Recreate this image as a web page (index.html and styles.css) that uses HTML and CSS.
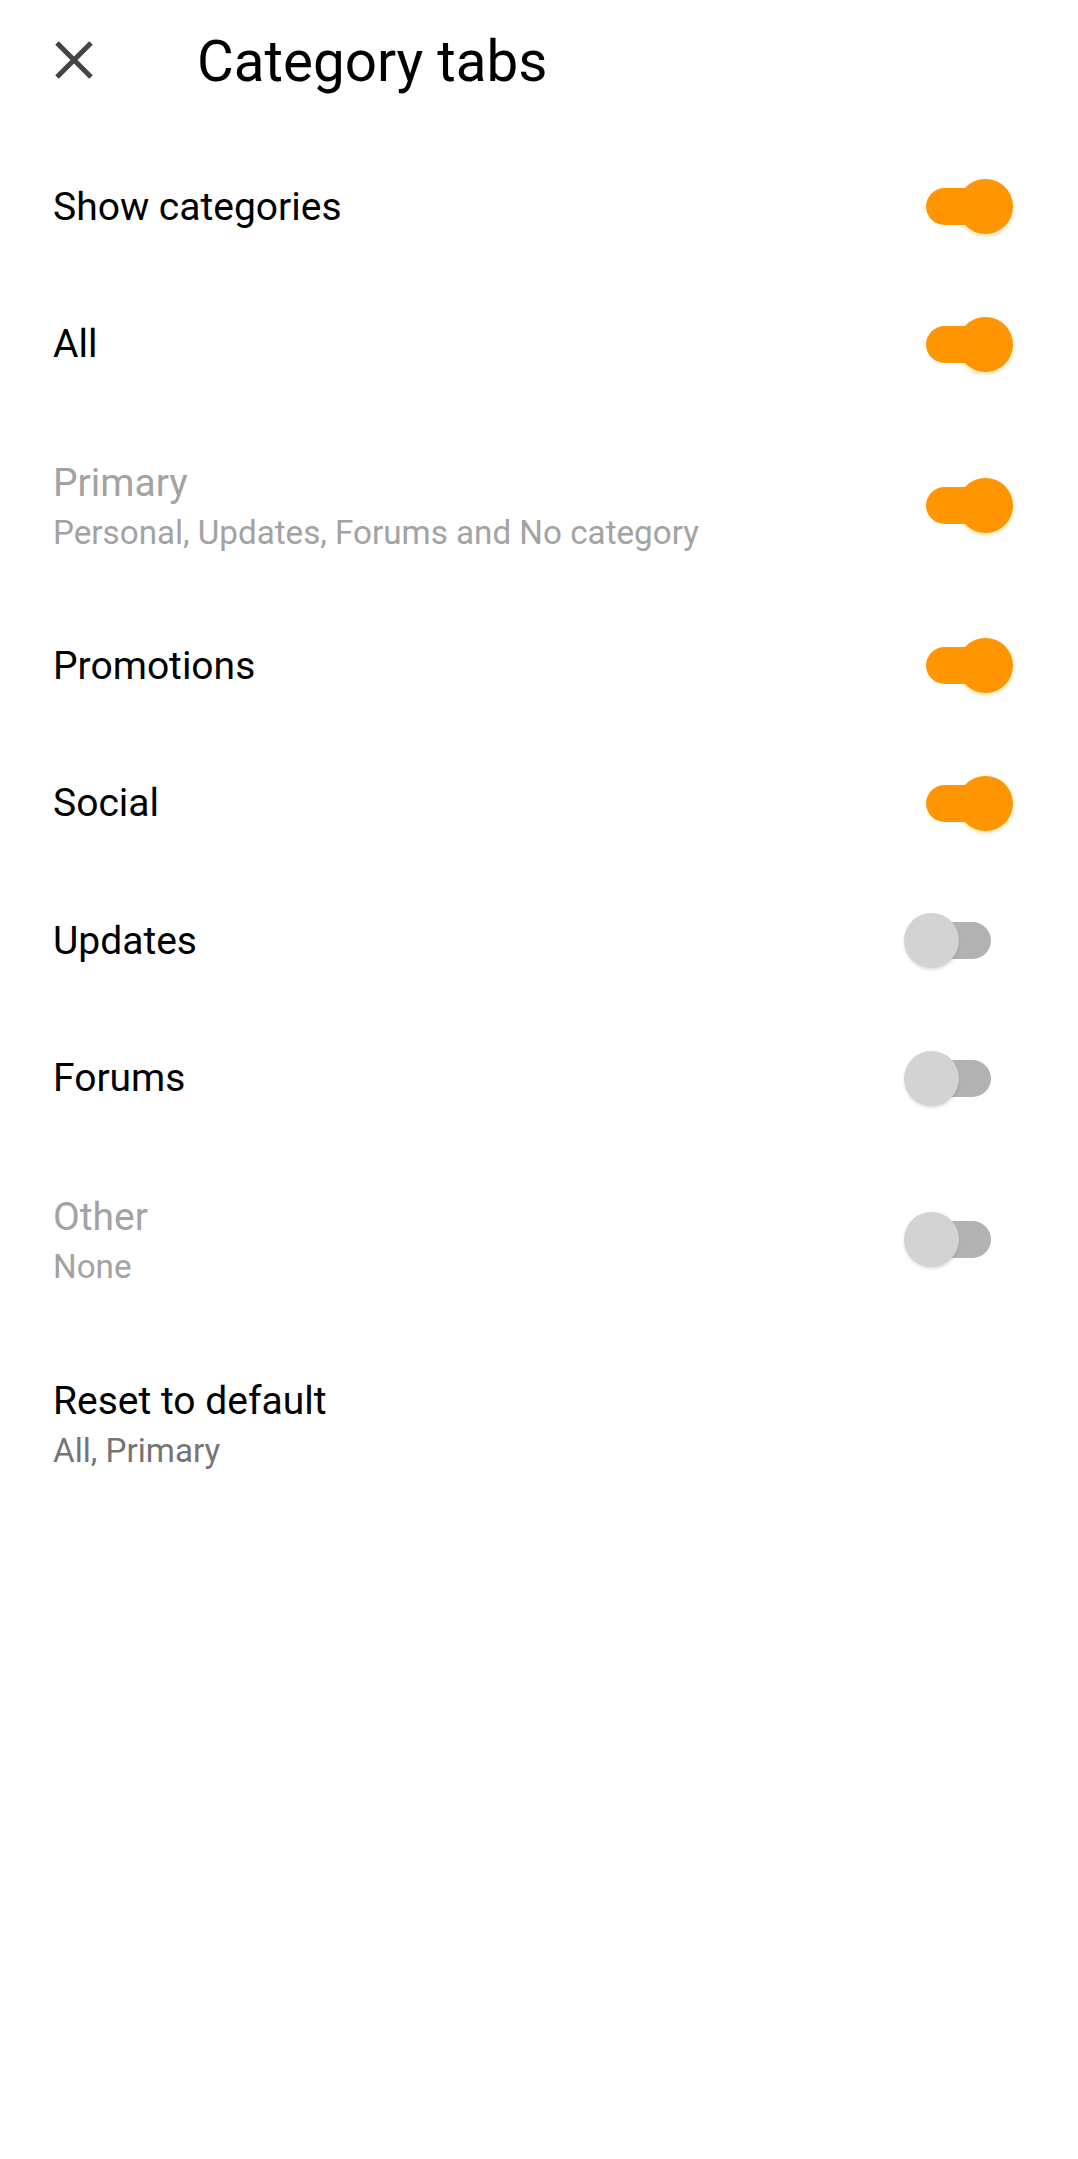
FILE: index.html
```html
<!DOCTYPE html>
<html lang="en">
<head>
  <meta charset="UTF-8">
  <meta name="viewport" content="width=device-width, initial-scale=1.0">
  <title>Category tabs</title>
  <link rel="stylesheet" href="styles.css">
</head>
<body>
  <div class="screen">
    <div class="toolbar">
      <button class="close-btn" aria-label="Close">
        <svg width="38" height="38" viewBox="0 0 38 38">
          <path d="M2 2 L36 36 M36 2 L2 36" stroke="#444" stroke-width="5" fill="none"/>
        </svg>
      </button>
      <h1 class="title">Category tabs</h1>
    </div>

    <div class="list">
      <div class="row">
        <div class="text"><div class="label">Show categories</div></div>
        <span class="switch on"><span class="track"></span><span class="thumb"></span></span>
      </div>
      <div class="row">
        <div class="text"><div class="label">All</div></div>
        <span class="switch on"><span class="track"></span><span class="thumb"></span></span>
      </div>
      <div class="row two disabled">
        <div class="text">
          <div class="label">Primary</div>
          <div class="summary">Personal, Updates, Forums and No category</div>
        </div>
        <span class="switch on"><span class="track"></span><span class="thumb"></span></span>
      </div>
      <div class="row">
        <div class="text"><div class="label">Promotions</div></div>
        <span class="switch on"><span class="track"></span><span class="thumb"></span></span>
      </div>
      <div class="row">
        <div class="text"><div class="label">Social</div></div>
        <span class="switch on"><span class="track"></span><span class="thumb"></span></span>
      </div>
      <div class="row">
        <div class="text"><div class="label">Updates</div></div>
        <span class="switch"><span class="track"></span><span class="thumb"></span></span>
      </div>
      <div class="row">
        <div class="text"><div class="label">Forums</div></div>
        <span class="switch"><span class="track"></span><span class="thumb"></span></span>
      </div>
      <div class="row two disabled">
        <div class="text">
          <div class="label">Other</div>
          <div class="summary">None</div>
        </div>
        <span class="switch"><span class="track"></span><span class="thumb"></span></span>
      </div>
      <div class="row two">
        <div class="text">
          <div class="label">Reset to default</div>
          <div class="summary">All, Primary</div>
        </div>
      </div>
    </div>
  </div>
</body>
</html>
```

FILE: styles.css
```css
body {
  margin: 0;
  padding: 0;
  background: #ffffff;
  font-family: Roboto, "Noto Sans", Arial, sans-serif;
  color: #000;
}
.screen {
  width: 1078px;
  min-height: 2159px;
  background: #ffffff;
}
.toolbar {
  display: flex;
  align-items: center;
  height: 124px;
}
.close-btn {
  display: flex;
  align-items: center;
  justify-content: center;
  width: 38px;
  height: 38px;
  margin-left: 55px;
  margin-top: -4px;
  padding: 0;
  border: none;
  background: none;
}
.title {
  margin: 0 0 0 104px;
  font-size: 56.5px;
  font-weight: 400;
  line-height: 64px;
  color: #000;
}
.list {
  padding-top: 14px;
}
.row {
  display: flex;
  align-items: center;
  padding: 40.75px 65px 40.75px 53px;
}
.row.two {
  padding-top: 42px;
  padding-bottom: 42px;
}
.text {
  flex: 1;
}
.label {
  font-size: 39px;
  line-height: 56px;
  color: #000;
}
.summary {
  font-size: 33.2px;
  line-height: 44px;
  color: #757575;
}
.disabled .label,
.disabled .summary {
  color: #a3a3a3;
}
.switch {
  position: relative;
  width: 109px;
  height: 55px;
  flex-shrink: 0;
}
.track {
  position: absolute;
  left: 22px;
  top: 9px;
  width: 65px;
  height: 37px;
  border-radius: 19px;
  background: #b2b2b2;
}
.thumb {
  position: absolute;
  left: 0;
  top: 0;
  width: 55px;
  height: 55px;
  border-radius: 50%;
  background: #d3d3d3;
  box-shadow: 0 2px 3px rgba(0, 0, 0, 0.12);
}
.switch.on .track {
  background: #ff9500;
}
.switch.on .thumb {
  left: 54px;
  background: #ff9500;
  box-shadow: 0 2px 4px rgba(255, 170, 0, 0.35);
}
```
